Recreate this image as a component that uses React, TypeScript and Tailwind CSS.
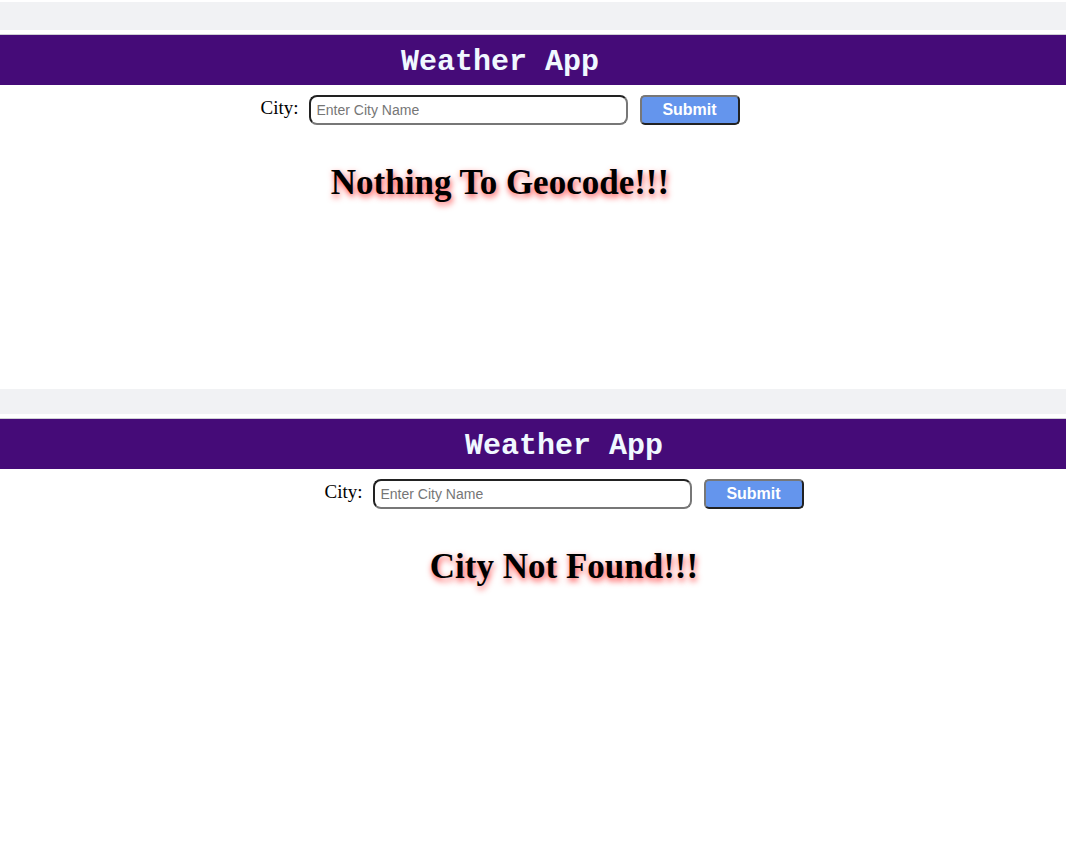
import { useState } from "react"

type PanelProps = {
  message: string
  shift: string
  grayHeight: string
  height: string
}

function WeatherPanel({ message, shift, grayHeight, height }: PanelProps) {
  const [city, setCity] = useState("")

  return (
    <section className={`flex flex-col pt-[2px] ${height}`}>
      <div className={`${grayHeight} bg-[#f1f2f4]`} />
      <div className="h-[4px]" />
      <header className="h-[51px] border-t border-[#cfcfd4] bg-[#450b78]">
        <div className={`flex h-full items-center justify-center ${shift}`}>
          <h1 className="pt-[4px] font-['Liberation_Mono','Courier_New',monospace] text-[30px] font-bold leading-none text-[#f0f8ff]">
            Weather App
          </h1>
        </div>
      </header>

      <div className={`mt-[10px] flex items-center justify-center ${shift}`}>
        <label
          htmlFor="city"
          className="mr-[10px] -mt-[3px] font-['Liberation_Serif','Times_New_Roman',serif] text-[19px] text-black"
        >
          City:
        </label>
        <input
          id="city"
          value={city}
          onChange={(e) => setCity(e.target.value)}
          placeholder="Enter City Name"
          className="h-[30px] w-[319px] rounded-[8px] border-2 border-t-[#222] border-l-[#222] border-b-[#777] border-r-[#777] bg-white px-[6px] font-['Liberation_Sans',Arial,sans-serif] text-[14px] text-black outline-none placeholder:text-[#767676]"
        />
        <button className="ml-[12px] h-[30px] w-[100px] rounded-[5px] border-2 border-t-[#777] border-l-[#777] border-b-[#222] border-r-[#222] bg-[#6495ed] font-['Liberation_Sans',Arial,sans-serif] text-[16px] font-bold text-white">
          Submit
        </button>
      </div>

      <div className={`mt-[39px] flex justify-center ${shift}`}>
        <p className="font-['Liberation_Serif','Times_New_Roman',serif] text-[35px] font-bold leading-[1.1] text-black [text-shadow:1px_3px_6px_rgba(255,0,0,0.75)]">
          {message}
        </p>
      </div>
    </section>
  )
}

export default function App() {
  return (
    <div className="min-h-[856px] w-[1066px] bg-white">
      <WeatherPanel
        message="Nothing To Geocode!!!"
        shift="pr-[66px]"
        grayHeight="h-[28px]"
        height="h-[387px]"
      />
      <WeatherPanel
        message="City Not Found!!!"
        shift="pl-[62px]"
        grayHeight="h-[25px]"
        height="h-[469px]"
      />
    </div>
  )
}
